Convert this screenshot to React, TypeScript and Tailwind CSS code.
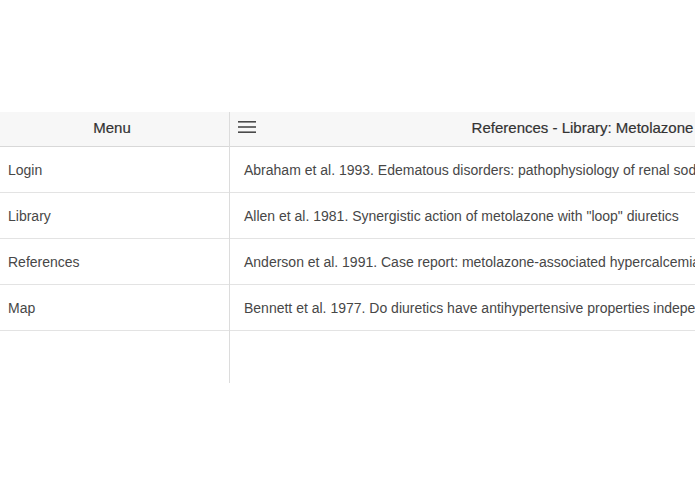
const menuItems = ["Login", "Library", "References", "Map"];

const references = [
  "Abraham et al. 1993. Edematous disorders: pathophysiology of renal sodium and water retention and treatment with diuretics",
  "Allen et al. 1981. Synergistic action of metolazone with \"loop\" diuretics",
  "Anderson et al. 1991. Case report: metolazone-associated hypercalcemia",
  "Bennett et al. 1977. Do diuretics have antihypertensive properties independent of natriuresis?",
];

function MenuIcon() {
  return (
    <svg width="18" height="12" viewBox="0 0 18 12" className="block">
      <rect x="0" y="0" width="18" height="1.6" fill="#4a4a4a" />
      <rect x="0" y="5.2" width="18" height="1.6" fill="#4a4a4a" />
      <rect x="0" y="10.4" width="18" height="1.6" fill="#4a4a4a" />
    </svg>
  );
}

export default function App() {
  return (
    <div
      className="w-[695px] h-[494px] overflow-hidden bg-white pt-[112px] text-[14px] text-[#474747]"
      style={{ fontFamily: '"Liberation Sans", Arial, Helvetica, sans-serif' }}
    >
      <div className="flex h-[271px] w-[935px]">
        {/* Menu pane */}
        <div className="w-[230px] shrink-0 border-r border-[#dcdcdc] flex flex-col">
          <div className="h-[35px] bg-[#f7f7f7] border-b border-[#d8d8d8] flex items-center justify-center pr-[5px] pb-[2px] text-[15px] text-[#333] [-webkit-text-stroke:0.2px_#333]">
            Menu
          </div>
          {menuItems.map((item) => (
            <div
              key={item}
              className="h-[46px] border-b border-[#e3e3e3] flex items-center pl-2 pt-[2px]"
            >
              {item}
            </div>
          ))}
        </div>

        {/* Detail pane */}
        <div className="w-[705px] min-w-0 shrink-0 flex flex-col">
          <div className="relative h-[35px] bg-[#f7f7f7] border-b border-[#d8d8d8] flex items-center justify-center pb-[2px] text-[15px] text-[#333] [-webkit-text-stroke:0.2px_#333]">
            <button className="absolute left-[8px] top-[9px]">
              <MenuIcon />
            </button>
            References - Library: Metolazone
          </div>
          {references.map((ref) => (
            <div
              key={ref}
              className="h-[46px] border-b border-[#e3e3e3] flex items-center pl-[14px] pt-[2px] whitespace-nowrap overflow-hidden"
            >
              {ref}
            </div>
          ))}
        </div>
      </div>
    </div>
  );
}
